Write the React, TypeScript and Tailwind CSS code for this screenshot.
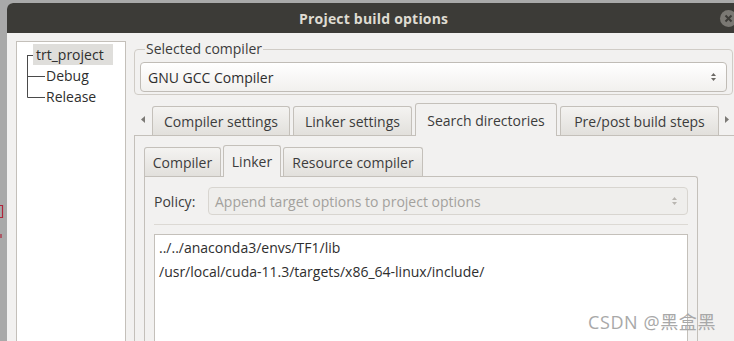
import React from 'react';

const font = { fontFamily: '"Open Sans", "Noto Sans CJK SC", sans-serif' };

function Spinner({ muted }: { muted?: boolean }) {
	const c = muted ? '#b9b6b1' : '#6b6965';
	return (
		<svg width="7" height="12" viewBox="0 0 7 12" className="shrink-0">
			<path d="M3.5 2 L6 5 L1 5 Z" fill={c} />
			<path d="M3.5 10 L6 7 L1 7 Z" fill={c} />
		</svg>
	);
}

function Arrow({ dir }: { dir: 'left' | 'right' }) {
	return (
		<svg width="4" height="7" viewBox="0 0 4 7">
			<path d={dir === 'left' ? 'M4 0 L0 3.5 L4 7 Z' : 'M0 0 L4 3.5 L0 7 Z'} fill="#7c7a76" />
		</svg>
	);
}

function Tab({ label, w, active, h }: { label: string; w: string; active?: boolean; h: string }) {
	return (
		<div
			className={`${w} ${h} shrink-0 flex items-center justify-center rounded-t-[3px] border border-[#c4c0ba] text-[14px] text-[#3c3c3c] ${
				active ? 'bg-[#f2f1f0] border-b-0 relative z-10 -mb-px' : 'bg-gradient-to-b from-[#f4f3f1] to-[#e2e0dc] border-b-0'
			}`}
		>
			{label}
		</div>
	);
}

function ProjectBuildOptions() {
	return (
		<div className="w-[734px] h-[341px] overflow-hidden bg-[#a9a9a9] flex pt-[3px] relative" style={font}>
			{/* strip of the window behind: bits of red text cut at the edge */}
			<div className="w-[7px] shrink-0 flex flex-col">
				<svg width="4" height="40" viewBox="0 0 4 40" className="mt-[201px]">
					<path d="M0 1.5 H3 M2.5 1 V14 M0 13.5 H3" stroke="#b0243a" strokeWidth="1.2" fill="none" />
					<path d="M1 30 V34" stroke="#b0243a" strokeWidth="1.2" />
				</svg>
			</div>
			<div className="w-[760px] shrink-0 flex flex-col bg-[#f2f1f0] rounded-tl-[6px] overflow-hidden">
				{/* title bar */}
				<div className="h-[30px] shrink-0 bg-[#3c3b37] flex items-center pl-[292px] relative">
					<div className="text-[14px] font-bold text-[#dfdbd2] tracking-[0.2px]">Project build options</div>
					<div className="absolute left-[713px] top-[7px] w-[17px] h-[17px] rounded-full bg-[#7a7873] flex items-center justify-center">
						<svg width="9" height="9" viewBox="0 0 9 9">
							<path d="M1.5 1.5 L7.5 7.5 M7.5 1.5 L1.5 7.5" stroke="#3c3b37" strokeWidth="2" />
						</svg>
					</div>
				</div>

				<div className="flex flex-1 pl-[9px] pt-[8px]">
					{/* tree */}
					<div className="w-[110px] shrink-0 bg-white border border-[#c4c0ba] border-b-0 pl-[10px] pt-[2px] flex items-start text-[14px] text-[#2e2e2e]">
						<svg width="6" height="63" viewBox="0 0 6 63" className="shrink-0 overflow-visible">
							<path d="M0.5 11 V53.5 M0.5 11.5 H8 M0.5 32.5 H18 M0.5 53.5 H18" stroke="#4a4a4a" strokeWidth="1" fill="none" />
						</svg>
						<div className="flex flex-col">
							<div className="h-[21px] flex items-center bg-[#dfdedb] px-[3px] w-[80px]">trt_project</div>
							<div className="h-[21px] flex items-center ml-[13px]">Debug</div>
							<div className="h-[21px] flex items-center ml-[13px]">Release</div>
						</div>
					</div>

					{/* right side */}
					<div className="ml-[8px] flex flex-col">
						<fieldset className="w-[599px] border border-[#d0ccc6] rounded-[4px] pl-[5px] pr-[5px] pb-[2px] pt-[5px]">
							<legend className="ml-[5px] px-[1px] text-[14px] text-[#3c3c3c] leading-[16px]">Selected compiler</legend>
							<div className="h-[30px] flex items-center justify-between rounded-[4px] border border-[#c0bcb6] bg-gradient-to-b from-white to-[#f1f0ee] pl-[7px] pr-[9px] text-[14px] text-[#2e2e2e]">
								<span>GNU GCC Compiler</span>
								<Spinner />
							</div>
						</fieldset>

						{/* outer tabs */}
						<div className="mt-[7px] flex items-end h-[33px]">
							<div className="w-[18px] shrink-0 flex items-center justify-center pb-[12px]">
								<Arrow dir="left" />
							</div>
							<div className="flex items-end gap-[3px]">
								<Tab label="Compiler settings" w="w-[138px]" h="h-[29px]" />
								<Tab label="Linker settings" w="w-[119px]" h="h-[29px]" />
								<Tab label="Search directories" w="w-[142px]" h="h-[33px]" active />
								<Tab label="Pre/post build steps" w="w-[159px]" h="h-[29px]" />
							</div>
							<div className="w-[16px] shrink-0 flex items-center justify-center pb-[12px]">
								<Arrow dir="right" />
							</div>
						</div>

						{/* outer pane */}
						<div className="w-[640px] flex-1 border border-[#c4c0ba] border-b-0 bg-[#f2f1f0] pl-[9px] pt-[8px] flex flex-col">
							<div className="flex items-end h-[32px] gap-[2px]">
								<Tab label="Compiler" w="w-[77px]" h="h-[29px]" />
								<Tab label="Linker" w="w-[58px]" h="h-[32px]" active />
								<Tab label="Resource compiler" w="w-[140px]" h="h-[29px]" />
							</div>
							<div className="w-[554px] flex-1 border border-[#c4c0ba] border-b-0 rounded-tr-[3px] bg-[#f2f1f0] pl-[9px] pr-[9px] pt-[10px] flex flex-col">
								<div className="flex items-center h-[28px]">
									<div className="w-[54px] text-[14px] text-[#3c3c3c]">Policy:</div>
									<div className="flex-1 h-[28px] flex items-center justify-between rounded-[4px] border border-[#d8d5d0] bg-[#efeeec] pl-[6px] pr-[9px] text-[14px] text-[#a3a19d]">
										<span>Append target options to project options</span>
										<Spinner muted />
									</div>
								</div>
								<div className="mt-[9px] h-px bg-[#dcd9d4]" />
								<div className="mt-[9px] flex-1 bg-white border border-[#c4c0ba] border-b-0 pl-[4px] pt-[1px] text-[14px] leading-[24px] text-[#2e2e2e]">
									<div>../../anaconda3/envs/TF1/lib</div>
									<div>/usr/local/cuda-11.3/targets/x86_64-linux/include/</div>
								</div>
							</div>
						</div>
					</div>
				</div>
			</div>

			<div className="absolute left-[588px] top-[309px] text-[18px] text-[#a8a8a8] tracking-[0.6px]">CSDN @黑盒黑</div>
		</div>
	);
}

export default function App() {
	return <ProjectBuildOptions />;
}
